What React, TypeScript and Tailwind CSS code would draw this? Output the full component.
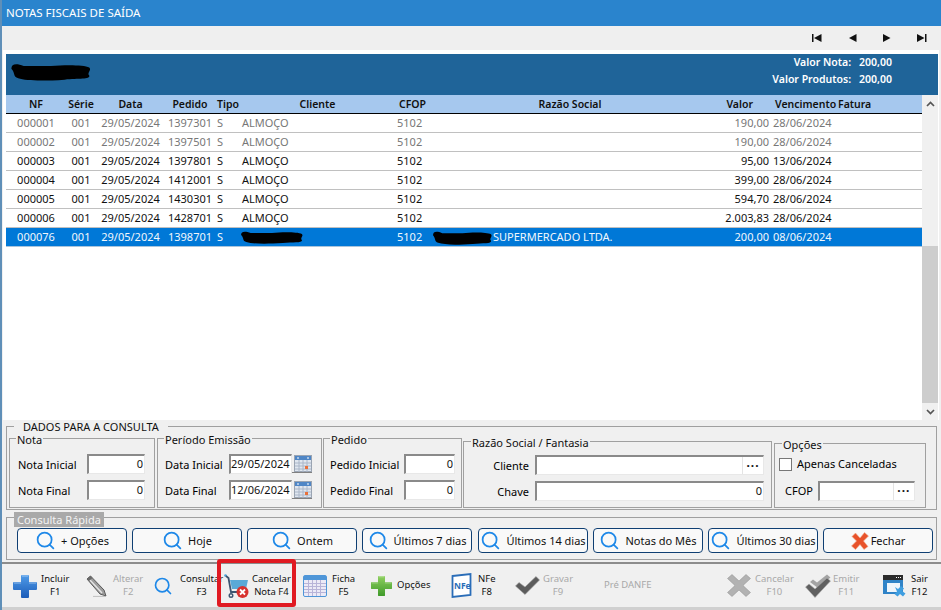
import React from "react";
import { Search } from "lucide-react";

const F = "[font-family:'Noto_Sans','Liberation_Sans',sans-serif]";

type Row = { nf: string; pedido: string; valor: string; venc: string; dim?: boolean };
const rows: Row[] = [
  { nf: "000001", pedido: "1397301", valor: "190,00", venc: "28/06/2024", dim: true },
  { nf: "000002", pedido: "1397501", valor: "190,00", venc: "28/06/2024", dim: true },
  { nf: "000003", pedido: "1397801", valor: "95,00", venc: "13/06/2024" },
  { nf: "000004", pedido: "1412001", valor: "399,00", venc: "28/06/2024" },
  { nf: "000005", pedido: "1430301", valor: "594,70", venc: "28/06/2024" },
  { nf: "000006", pedido: "1428701", valor: "2.003,83", venc: "28/06/2024" },
];

const COLS = "grid grid-cols-[60px_30px_69px_50px_25px_155px_35px_280px_60px_66px_1fr]";

function Blob({ w, h }: { w: number; h: number }) {
  return (
    <svg width={w} height={h} viewBox="0 0 60 14" preserveAspectRatio="none" className="shrink-0">
      <path d="M1 5C1 1 5 1 10 3L30 3C40 2 54 2 58 4C60 6 56 8 58 10C59 13 50 12 40 13C25 14 12 14 6 12C2 11 4 8 1 5Z" fill="#000" />
    </svg>
  );
}

function DataRow({ r }: { r: Row }) {
  return (
    <div className={`${COLS} h-[19px] items-center border-b border-[#c0c0c0] ${r.dim ? "text-[#777777]" : "text-[#111111]"}`}>
      <div className="text-center">{r.nf}</div>
      <div className="text-center">001</div>
      <div className="text-center">29/05/2024</div>
      <div className="text-center">{r.pedido}</div>
      <div className="pl-[2px]">S</div>
      <div className="pl-[2px]">ALMOÇO</div>
      <div className="pl-[2px]">5102</div>
      <div />
      <div className="text-right pr-[1px]">{r.valor}</div>
      <div className="pl-[3px]">{r.venc}</div>
      <div />
    </div>
  );
}

function Legend({ children, className = "" }: { children: React.ReactNode; className?: string }) {
  return <div className={`absolute -top-[6px] bg-[#f0f0f0] px-[1px] leading-[14px] text-[#111] ${className}`}>{children}</div>;
}

function Input({ value, w, align = "right", dots }: { value?: string; w: string; align?: string; dots?: boolean }) {
  return (
    <div className={`${w} h-[20px] flex items-center bg-white border-t-2 border-l-2 border-t-[#8a8a8a] border-l-[#8a8a8a] border-r border-b border-r-[#e8e8e8] border-b-[#e8e8e8] ${align === "right" ? "justify-end" : "justify-start"} text-[#111]`}>
      {dots ? (
        <div className="ml-auto h-full w-[21px] flex items-center justify-center border-l border-[#e4e4e4] font-bold text-[12px] tracking-[1px] leading-none">···</div>
      ) : (
        <span className={align === "right" ? "pr-[1px]" : ""}>{value}</span>
      )}
    </div>
  );
}

function CalIcon() {
  return (
    <svg width="20" height="18" viewBox="0 0 20 18" className="shrink-0">
      <rect x="2.5" y="0.5" width="17" height="16" fill="#dfe6ef" stroke="#9aa4b2" />
      <rect x="3" y="1" width="16" height="4" fill="#4f86c6" />
      <path d="M5 3h2M15 3h2" stroke="#fff" />
      <path d="M3 8h16M3 11h16M3 14h16M7 5v12M11 5v12M15 5v12" stroke="#aab6c8" strokeWidth="1" />
      <rect x="13" y="11" width="3" height="3" fill="#e8703a" />
      <path d="M0 17.5H20" stroke="#808080" />
    </svg>
  );
}

function QuickButton({ label, icon = true, className = "" }: { label: string; icon?: boolean; className?: string }) {
  return (
    <div className={`w-[110px] h-[25px] shrink-0 flex items-center justify-center ${icon ? "gap-[5px]" : "gap-[2px]"} rounded-[4px] border border-[#0f3f73] bg-[#f9f9f9] text-[#111] whitespace-nowrap ${className}`}>
      {icon ? (
        <Search size={21} strokeWidth={2} color="#1e88e8" className="shrink-0" />
      ) : (
        <svg width="18" height="18" viewBox="0 0 18 18" className="shrink-0">
          <path d="M1 4.5L4.5 1L9 6L13.5 0.5L17.5 4L12.5 9L17 14.5L13 17.5L9 12.5L4.5 17.5L0.5 14L5.5 9Z" fill="#e8522a" stroke="#f3b090" strokeWidth="0.6" />
        </svg>
      )}
      <span className="text-[11px] pt-[1px]">{label}</span>
    </div>
  );
}

function ToolLabel({ a, b, off }: { a: string; b?: string; off?: boolean }) {
  return (
    <div className={`flex flex-col items-center leading-[12px] text-[9.5px] whitespace-nowrap ${off ? "text-[#a8a8a8]" : "text-[#111]"}`}>
      <span>{a}</span>
      {b && <span className="mt-[1px]">{b}</span>}
    </div>
  );
}

const PlusIcon = ({ c1, c2, s = 24 }: { c1: string; c2: string; s?: number }) => (
  <svg width={s} height={s} viewBox="0 0 24 24" className="shrink-0">
    <defs>
      <linearGradient id={`g${c1.slice(1)}`} x1="0" y1="0" x2="0" y2="1">
        <stop offset="0" stopColor={c1} />
        <stop offset="1" stopColor={c2} />
      </linearGradient>
    </defs>
    <path d="M9 1Q8 1 8 2V8H1Q0 8 0 9V15Q0 16 1 16H8V23Q8 24 9 24H15Q16 24 16 23V16H23Q24 16 24 15V9Q24 8 23 8H16V2Q16 1 15 1Z" fill={`url(#g${c1.slice(1)})`} />
    <path d="M9 2H15M1 9H8M16 9H23" stroke="#ffffff" strokeOpacity="0.45" fill="none" />
  </svg>
);

const Pencil = () => (
  <svg width="21" height="22" viewBox="0 0 21 22" className="shrink-0">
    <path d="M1 4L4.5 1L18 15L20 21L14 19Z" fill="#9c9c9c" stroke="#5a5a5a" />
    <path d="M3 4L16 18" stroke="#e6e6e6" strokeWidth="1.4" />
    <path d="M1 4L4.5 1L6.5 3L3 6Z" fill="#6a6a6a" />
    <path d="M19 21.5H7" stroke="#c4c4c4" strokeWidth="1.2" />
  </svg>
);

const Cart = () => (
  <svg width="25" height="24" viewBox="0 0 25 24" className="shrink-0">
    <circle cx="1.5" cy="1.5" r="1.3" fill="#4aa0d8" />
    <path d="M2 2L4.5 4L7 18H16" fill="none" stroke="#3c5570" strokeWidth="1.8" />
    <path d="M6 6H24L22 15H8Z" fill="#5aa9d6" />
    <circle cx="7" cy="21.5" r="1.8" fill="none" stroke="#3c5570" strokeWidth="1.4" />
    <circle cx="18.5" cy="18" r="6" fill="#d8322e" />
    <path d="M16 15.5L21 20.5M21 15.5L16 20.5" stroke="#fff" strokeWidth="1.8" />
  </svg>
);

const BigCal = () => (
  <svg width="24" height="22" viewBox="0 0 24 22" className="shrink-0">
    <rect x="0.5" y="0.5" width="23" height="21" rx="1.5" fill="#eceaf6" stroke="#4f96d8" />
    <rect x="1" y="1" width="22" height="4" fill="#4f96d8" />
    <path d="M1 8.5h22M1 11.5h22M1 14.5h22M1 17.5h22M5.5 5v16M9.5 5v16M13.5 5v16M17.5 5v16" stroke="#b8b4d8" />
  </svg>
);

const NFe = () => (
  <svg width="21" height="25" viewBox="0 0 21 25" className="shrink-0">
    <path d="M1.5 3L19.5 1V22L1.5 24Z" fill="#fff" stroke="#2a6db8" strokeWidth="1.8" />
    <text x="3" y="16" fontSize="8.5" fontWeight="700" fill="#2a6db8" fontFamily="Noto Sans">NFe</text>
  </svg>
);

const Check = () => (
  <svg width="25" height="19" viewBox="0 0 25 19" className="shrink-0">
    <path d="M0.5 10L4 6.5L10 11L21 0.5L24.5 4L10 18.5Z" fill="#5c5c5c" stroke="#9a9a9a" strokeWidth="0.6" />
  </svg>
);

const DoubleCheck = () => (
  <svg width="26" height="24" viewBox="0 0 26 24" className="shrink-0">
    <path d="M5 8L8 5.5L12 8.5L22 0.5L25.5 3.5L13 14Z" fill="#a4a4a4" />
    <path d="M0.5 13L4 10L10 15L22 4L25.5 7L10 23.5Z" fill="#606060" stroke="#aaa" strokeWidth="0.6" />
  </svg>
);

const GrayX = () => (
  <svg width="24" height="23" viewBox="0 0 24 23" className="shrink-0">
    <path d="M0.5 4.5L5 0.5L12 7L19 0.5L23.5 4.5L16 11.5L23.5 18.5L19 22.5L12 16L5 22.5L0.5 18.5L8 11.5Z" fill="#b2b2b2" stroke="#8c8c8c" strokeWidth="0.5" />
  </svg>
);

const SairIcon = () => (
  <svg width="23" height="22" viewBox="0 0 23 22" className="shrink-0">
    <rect x="0" y="0" width="20" height="5" fill="#2b2b2b" />
    <path d="M13 2.5h1M15 2.5h1M17 2.5h1" stroke="#fff" />
    <rect x="0" y="5" width="20" height="14" fill="#2f83c7" />
    <rect x="4" y="8" width="13" height="9" fill="#eef5fb" />
    <path d="M12 12L15 14L18 11L21 13.5L19 16L22.5 18.5L20 21.5L17 19L14.5 21.5L11.5 19L14 16.5Z" fill="#3f9ee0" />
  </svg>
);

const NavIcon = ({ d }: { d: string }) => (
  <svg width="10" height="8" viewBox="0 0 10 8" className="shrink-0">
    <path d={d} fill="#111" />
  </svg>
);

export default function App() {
  const lab = "pt-[2px]";
  return (
    <div className={`${F} w-[941px] h-[610px] overflow-hidden bg-[#f0f0f0] text-[11px] flex flex-col border-l-2 border-[#5f8fb8]`}>
      <div className="h-[26px] shrink-0 bg-[#2a84cd] flex items-center pl-[4px] text-[11.5px] text-white">NOTAS FISCAIS DE SAÍDA</div>
      <div className="h-[24px] shrink-0 bg-[#efefef] flex items-center">
        <div className="ml-auto flex items-center gap-[25px] pr-[14px]">
          <NavIcon d="M0 0H1.5V8H0ZM2 4L9.5 0V8Z" />
          <NavIcon d="M2 4L9.5 0V8Z" />
          <NavIcon d="M1 0L8.5 4L1 8Z" />
          <NavIcon d="M0 0L7.5 4L0 8ZM8 0H9.5V8H8Z" />
        </div>
      </div>

      <div className="h-[370px] w-[936px] shrink-0 ml-[1px] bg-white pt-[4px] pl-[3px]">
        <div className="h-[41px] w-[932px] bg-[#1f6499] flex justify-between font-semibold text-[10.5px] text-white">
          <div className="pl-[4px] pt-[8px]"><Blob w={82} h={19} /></div>
          <div className="flex flex-col items-end pr-[46px] leading-[17px]">
            <div className="flex gap-[8px]"><span>Valor Nota:</span><span>200,00</span></div>
            <div className="flex gap-[8px]"><span>Valor Produtos:</span><span>200,00</span></div>
          </div>
        </div>
        <div className="flex h-[325px]">
          <div className="w-[916px] flex flex-col">
            <div className={`${COLS} h-[19px] shrink-0 items-center pt-[1px] bg-[#a6c8ee] border-b border-black font-semibold text-[10.5px] text-[#111]`}>
              <div className="text-center">NF</div>
              <div className="text-center">Série</div>
              <div className="text-center">Data</div>
              <div className="text-center">Pedido</div>
              <div className="pl-[2px]">Tipo</div>
              <div className="text-center">Cliente</div>
              <div className="text-center">CFOP</div>
              <div className="text-center">Razão Social</div>
              <div className="text-right pr-[17px]">Valor</div>
              <div className="pl-[5px] whitespace-nowrap">Vencimento</div>
              <div className="pl-[2px]">Fatura</div>
            </div>
            {rows.map((r) => (
              <DataRow key={r.nf} r={r} />
            ))}
            <div className={`${COLS} h-[19px] items-center bg-[#0078d7] border-b border-[#a9c4dc] text-[#f2f7fc]`}>
              <div className="text-center">000076</div>
              <div className="text-center">001</div>
              <div className="text-center">29/05/2024</div>
              <div className="text-center">1398701</div>
              <div className="pl-[2px]">S</div>
              <div className="pl-[0px]"><Blob w={64} h={14} /></div>
              <div className="pl-[2px]">5102</div>
              <div className="flex items-center pl-[2px]"><Blob w={61} h={15} /><span className="whitespace-nowrap">SUPERMERCADO LTDA.</span></div>
              <div className="text-right pr-[1px]">200,00</div>
              <div className="pl-[3px]">08/06/2024</div>
              <div />
            </div>
          </div>
          <div className="w-[16px] bg-[#f0f0f0] flex flex-col items-center">
            <div className="h-[18px] shrink-0 flex items-center justify-center">
              <svg width="9" height="6" viewBox="0 0 9 6"><path d="M1 5L4.5 1.5L8 5" fill="none" stroke="#555" strokeWidth="1.7" /></svg>
            </div>
            <div className="h-[133px] shrink-0" />
            <div className="h-[157px] shrink-0 w-full bg-[#cdcdcd]" />
            <div className="h-[17px] shrink-0 flex items-center justify-center">
              <svg width="9" height="6" viewBox="0 0 9 6"><path d="M1 1L4.5 4.5L8 1" fill="none" stroke="#555" strokeWidth="1.7" /></svg>
            </div>
          </div>
        </div>
      </div>

      <div className="relative h-[84px] shrink-0 mt-[6px] ml-[4px] mr-[4px] border border-[#a0a0a0] flex pl-[2px] pt-[11px]">
        <Legend className="left-[7px] !px-[9px] !leading-[12px]">DADOS PARA A CONSULTA</Legend>
        <div className="relative w-[146px] h-[70px] shrink-0 border border-[#a0a0a0]">
          <Legend className="left-[6px]">Nota</Legend>
          <div className="flex flex-col gap-[6px] pt-[15px] pl-[8px]">
            <div className="flex items-center justify-between pr-[9px]"><span className={lab}>Nota Inicial</span><Input value="0" w="w-[58px]" /></div>
            <div className="flex items-center justify-between pr-[9px]"><span className={lab}>Nota Final</span><Input value="0" w="w-[58px]" /></div>
          </div>
        </div>
        <div className="relative w-[165px] h-[70px] shrink-0 ml-[2px] border border-[#a0a0a0]">
          <Legend className="left-[6px]">Período Emissão</Legend>
          <div className="flex flex-col gap-[6px] pt-[15px] pl-[7px]">
            <div className="flex items-center justify-between pr-[9px]"><span className={lab}>Data Inicial</span><div className="flex items-center"><Input value="29/05/2024" align="left" w="w-[63px]" /><CalIcon /></div></div>
            <div className="flex items-center justify-between pr-[9px]"><span className={lab}>Data Final</span><div className="flex items-center"><Input value="12/06/2024" align="left" w="w-[63px]" /><CalIcon /></div></div>
          </div>
        </div>
        <div className="relative w-[139px] h-[70px] shrink-0 ml-[1px] border border-[#a0a0a0]">
          <Legend className="left-[6px]">Pedido</Legend>
          <div className="flex flex-col gap-[6px] pt-[15px] pl-[6px]">
            <div className="flex items-center justify-between pr-[6px]"><span className={lab}>Pedido Inicial</span><Input value="0" w="w-[51px]" /></div>
            <div className="flex items-center justify-between pr-[6px]"><span className={lab}>Pedido Final</span><Input value="0" w="w-[51px]" /></div>
          </div>
        </div>
        <div className="relative w-[309px] h-[67px] shrink-0 mt-[3px] ml-[1px] border border-[#a0a0a0]">
          <Legend className="left-[7px]">Razão Social / Fantasia</Legend>
          <div className="flex flex-col gap-[6px] pt-[13px]">
            <div className="flex items-center justify-end gap-[6px] pr-[7px]"><span className={lab}>Cliente</span><Input dots w="w-[229px]" /></div>
            <div className="flex items-center justify-end gap-[6px] pr-[7px]"><span className={lab}>Chave</span><Input value="0" w="w-[229px]" /></div>
          </div>
        </div>
        <div className="relative w-[152px] h-[65px] shrink-0 mt-[5px] ml-[2px] border border-[#a0a0a0]">
          <Legend className="left-[7px]">Opções</Legend>
          <div className="flex items-center gap-[5px] pt-[12px] pl-[4px]">
            <div className="w-[13px] h-[13px] bg-white border border-[#777]" />
            <span>Apenas Canceladas</span>
          </div>
          <div className="flex items-center gap-[5px] pt-[8px] pl-[10px]"><span className={lab}>CFOP</span><Input dots w="w-[97px]" /></div>
        </div>
      </div>

      <div className="relative h-[43px] shrink-0 mt-[7px] ml-[4px] mr-[4px] border border-[#a0a0a0] flex gap-[5px] pl-[10px] pt-[10px]">
        <div className="absolute -top-[6px] left-[7px] bg-[#a9a9a9] px-[3px] leading-[15px] text-[#f4f4f4]">Consulta Rápida</div>
        <QuickButton label="+ Opções" />
        <QuickButton label="Hoje" />
        <QuickButton label="Ontem" />
        <QuickButton label="Últimos 7 dias" />
        <QuickButton label="Últimos 14 dias" className="ml-[1px]" />
        <QuickButton label="Notas do Mês" />
        <QuickButton label="Últimos 30 dias" />
        <QuickButton label="Fechar" icon={false} />
      </div>

      <div className="relative h-[45px] shrink-0 mt-[2px] border-t-2 border-[#8c8c8c] flex items-center">
        <div className="w-[78px] pl-[11px] flex items-center gap-[4px] shrink-0"><PlusIcon c1="#4f9be8" c2="#1c5cb8" /><ToolLabel a="Incluir" b="F1" /></div>
        <div className="w-[70px] pl-[6px] flex items-center gap-[6px] shrink-0"><Pencil /><ToolLabel off a="Alterar" b="F2" /></div>
        <div className="w-[70px] pl-[3px] flex items-center gap-[7px] shrink-0"><Search size={20} strokeWidth={2} color="#1e88e8" className="shrink-0" /><ToolLabel a="Consultar" b="F3" /></div>
        <div className="w-[78px] pl-[4px] flex items-center gap-[3px] shrink-0"><Cart /><ToolLabel a="Cancelar" b="Nota F4" /></div>
        <div className="w-[68px] pl-[5px] flex items-center gap-[5px] shrink-0"><BigCal /><ToolLabel a="Ficha" b="F5" /></div>
        <div className="w-[80px] pl-[5px] flex items-center gap-[5px] shrink-0"><PlusIcon c1="#8fd060" c2="#3f9a2a" s={21} /><span className="text-[9.5px] text-[#111]">Opções</span></div>
        <div className="w-[64px] pl-[5px] flex items-center gap-[6px] shrink-0"><NFe /><ToolLabel a="NFe" b="F8" /></div>
        <div className="w-[90px] pl-[5px] flex items-center gap-[3px] shrink-0"><Check /><ToolLabel off a="Gravar" b="F9" /></div>
        <div className="w-[120px] pl-[4px] shrink-0 text-[9.5px] text-[#a8a8a8]">Pré DANFE</div>
        <div className="w-[80px] pl-[7px] flex items-center gap-[4px] shrink-0"><GrayX /><ToolLabel off a="Cancelar" b="F10" /></div>
        <div className="w-[78px] pl-[5px] flex items-center gap-[2px] shrink-0"><DoubleCheck /><ToolLabel off a="Emitir" b="F11" /></div>
        <div className="w-[61px] pl-[5px] flex items-center gap-[5px] shrink-0"><SairIcon /><ToolLabel a="Sair" b="F12" /></div>
        <div className="absolute left-[215px] -top-[5px] w-[79px] h-[48px] border-[4px] border-[#e01a22] rounded-[3px]" />
      </div>
      <div className="flex-1 bg-[#d0d0d0]" />
    </div>
  );
}
